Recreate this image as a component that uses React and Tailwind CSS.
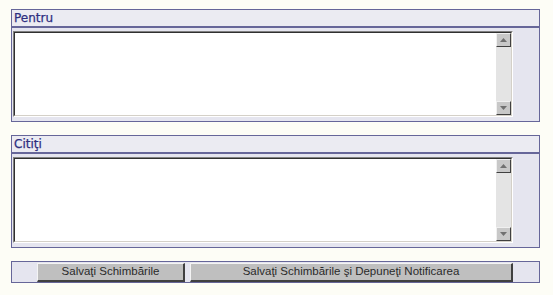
import React from "react";

function ScrollBtn({ up }) {
  return (
    <div className="w-[15px] h-[14px] bg-[#c8c8c8] border-t border-l border-t-[#f0f0f0] border-l-[#f0f0f0] border-r border-b border-r-[#404040] border-b-[#404040] flex items-center justify-center">
      <svg width="7" height="4" viewBox="0 0 7 4">
        {up ? (
          <polygon points="3.5,0 7,4 0,4" fill="#707070" />
        ) : (
          <polygon points="0,0 7,0 3.5,4" fill="#707070" />
        )}
      </svg>
    </div>
  );
}

function FakeTextarea() {
  return (
    <div className="w-[500px] h-[86px] border-t border-l border-t-[#808080] border-l-[#808080] border-b border-r border-b-[#ffffff] border-r-[#ffffff]">
      <div className="w-full h-full border-t border-l border-t-[#303030] border-l-[#303030] border-b border-r border-b-[#d4d0c8] border-r-[#d4d0c8] bg-white flex justify-end">
        <div className="w-[15px] h-full bg-[#e4e4e4] flex flex-col justify-between">
          <ScrollBtn up />
          <ScrollBtn />
        </div>
      </div>
    </div>
  );
}

function Panel({ title }) {
  return (
    <div className="w-[529px] border border-[#666699] bg-[#e5e5ef]">
      <div className="h-[18px] bg-[#ebebf2] border-b-2 border-[#666699] pl-[2px] flex items-center">
        <span
          className="text-[12px] font-normal text-[#2e2e80] leading-none"
          style={{ fontFamily: '"DejaVu Sans", Verdana, sans-serif', WebkitTextStroke: "0.25px #2e2e80" }}
        >
          {title}
        </span>
      </div>
      <div className="pl-[1px] pt-[3px] pb-[4px]">
        <FakeTextarea />
      </div>
    </div>
  );
}

function Btn({ w, children }) {
  return (
    <div
      className={`${w} h-[19px] bg-[#bfbfbf] border-t border-l border-t-[#f4f4f4] border-l-[#f4f4f4] border-r-2 border-b-2 border-r-[#404040] border-b-[#404040] flex items-center justify-center text-[11.5px] text-[#2a2a2a]`}
      style={{ fontFamily: '"Liberation Sans", Arial, sans-serif' }}
    >
      {children}
    </div>
  );
}

export default function App() {
  return (
    <div className="w-[553px] h-[295px] bg-[#fdfdf6] pt-[9px] pl-[11px] flex flex-col gap-[13px]">
      <Panel title="Pentru" />
      <Panel title="Citiţi" />
      <div className="w-[529px] h-[22px] border border-[#666699] bg-[#e5e5ef] flex items-start pt-[1px] pl-[25px] gap-[5px]">
        <Btn w="w-[148px]">Salvaţi Schimbările</Btn>
        <Btn w="w-[323px]">Salvaţi Schimbările şi Depuneţi Notificarea</Btn>
      </div>
    </div>
  );
}
